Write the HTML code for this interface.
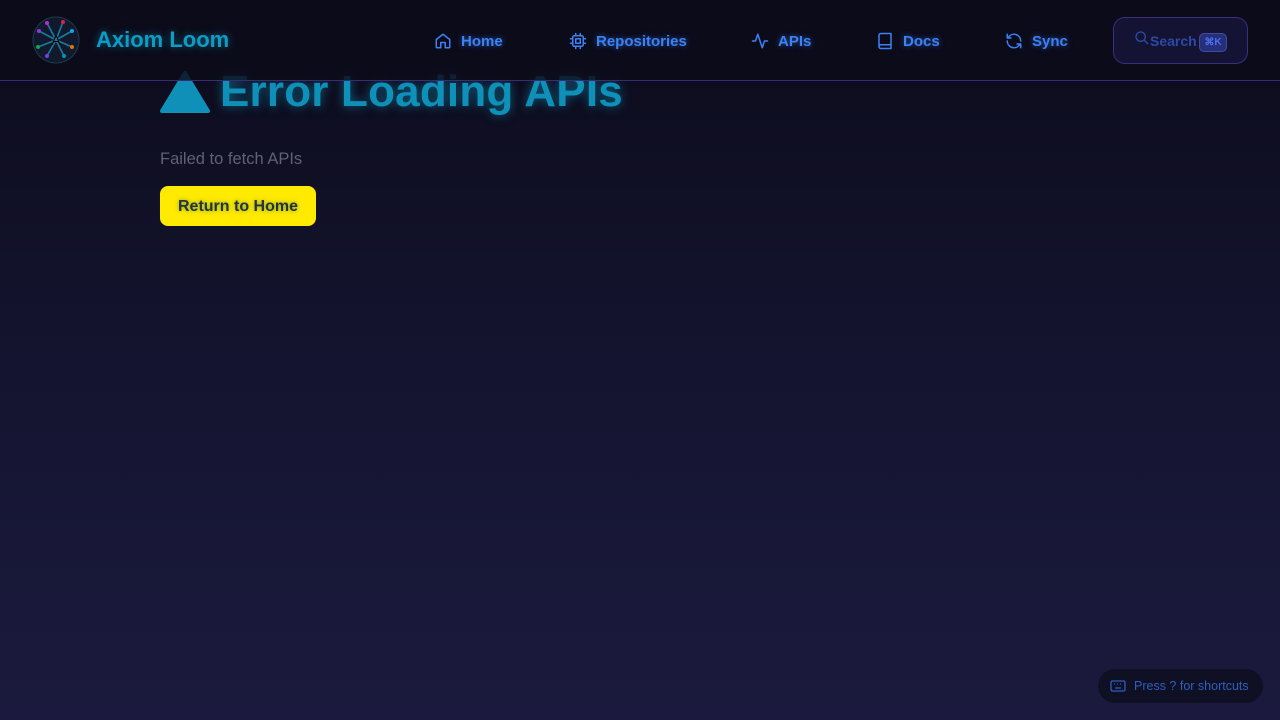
<!DOCTYPE html>
<html><head><meta charset="utf-8"><style>
*{margin:0;padding:0;box-sizing:border-box}
body{width:1280px;height:720px;overflow:hidden;background:linear-gradient(180deg,#0c0b1a 0%,#141430 50%,#1b1a3e 100%);font-family:"Liberation Sans",sans-serif;position:relative}
header{position:absolute;left:0;top:0;width:1280px;height:81px;background:rgba(12,11,26,0.82);border-bottom:1px solid #3b2a78;z-index:2}
.logo{position:absolute;left:32px;top:16px;width:48px;height:48px}
.brand{position:absolute;left:96px;top:27px;font-size:22px;font-weight:bold;color:#0e9cc4;text-shadow:0 0 8px rgba(14,156,196,.6)}
.nav{position:absolute;top:32px;display:flex;align-items:center;gap:9px;color:#3b82f6;font-size:15px;font-weight:bold;text-shadow:0 0 6px rgba(59,130,246,.6)}
.nav svg{width:18px;height:18px;fill:none;stroke:#3b82f6;stroke-width:2;stroke-linecap:round;stroke-linejoin:round}
.search{position:absolute;left:1113px;top:17px;width:135px;height:47px;border:1px solid #3a2f7a;border-radius:12px;background:rgba(40,35,100,.35);color:#2a4aa8;font-size:14px;font-weight:bold}
.kbd{position:absolute;left:85px;top:15px;width:28px;height:19px;border:1px solid #3f4a9a;border-radius:5px;background:#26307a;color:#4a6ef0;font-size:10px;text-align:center;line-height:17px}
h1{position:absolute;left:160px;top:67px;font-size:44px;letter-spacing:0.2px;font-weight:bold;color:#0e90b8;text-shadow:0 0 10px rgba(14,156,196,.6);display:flex;align-items:center;gap:10px;z-index:1}
.msg{position:absolute;left:160px;top:150px;font-size:16.5px;color:#5f6272}
.btn{position:absolute;left:160px;top:186px;width:156px;height:40px;background:#ffea00;border-radius:8px;color:#2b3040;font-size:16px;font-weight:bold;text-align:center;line-height:42px;text-shadow:0 0 4px rgba(60,140,60,.7)}
.sc{position:absolute;left:1098px;top:669px;width:165px;height:34px;border-radius:17px;background:#0f1024;color:#2f5ec0;font-size:12.5px;line-height:35px;padding-left:36px}
</style></head><body>
<header>
<svg class="logo" viewBox="0 0 48 48"><circle cx="24" cy="24" r="23" fill="#101a2c" stroke="#1e3a4a"/>
<g stroke="#1a7aa0" stroke-width="1.6"><line x1="15" y1="7" x2="24" y2="24"/><line x1="31" y1="6" x2="24" y2="24"/><line x1="7" y1="15" x2="24" y2="24"/><line x1="40" y1="15" x2="24" y2="24"/><line x1="6" y1="31" x2="24" y2="24"/><line x1="40" y1="31" x2="24" y2="24"/><line x1="15" y1="40" x2="24" y2="24"/><line x1="32" y1="40" x2="24" y2="24"/></g>
<circle cx="15" cy="7" r="2" fill="#c026d3"/><circle cx="31" cy="6" r="2" fill="#e11d48"/><circle cx="7" cy="15" r="2" fill="#9333ea"/><circle cx="40" cy="15" r="2" fill="#0ea5e9"/><circle cx="6" cy="31" r="2" fill="#16a34a"/><circle cx="40" cy="31" r="2" fill="#d97706"/><circle cx="15" cy="40" r="2" fill="#7c3aed"/><circle cx="32" cy="40" r="2" fill="#0891b2"/>
<text x="24" y="29" font-size="14" text-anchor="middle" fill="#000" font-family="Liberation Sans">A</text></svg>
<div class="brand">Axiom Loom</div>
<div class="nav" style="left:434px"><svg viewBox="0 0 24 24"><path d="M3 10l9-7 9 7v10a1 1 0 0 1-1 1h-5v-7H9v7H4a1 1 0 0 1-1-1z"/></svg>Home</div>
<div class="nav" style="left:569px"><svg viewBox="0 0 24 24"><rect x="5" y="5" width="14" height="14" rx="2"/><rect x="9" y="9" width="6" height="6"/><path d="M9 2v3M15 2v3M9 19v3M15 19v3M2 9h3M2 15h3M19 9h3M19 15h3"/></svg>Repositories</div>
<div class="nav" style="left:751px"><svg viewBox="0 0 24 24"><path d="M22 12h-4l-3 9L9 3l-3 9H2"/></svg>APIs</div>
<div class="nav" style="left:876px"><svg viewBox="0 0 24 24"><path d="M4 19.5A2.5 2.5 0 0 1 6.5 17H20V2H6.5A2.5 2.5 0 0 0 4 4.5v15zM4 19.5A2.5 2.5 0 0 0 6.5 22H20v-5"/></svg>Docs</div>
<div class="nav" style="left:1005px"><svg viewBox="0 0 24 24"><path d="M21 12a9 9 0 0 0-15.5-6.2L3 8M3 3v5h5M3 12a9 9 0 0 0 15.5 6.2L21 16M21 21v-5h-5"/></svg>Sync</div>
<div class="search"><svg style="position:absolute;left:20px;top:12px" width="16" height="16" viewBox="0 0 24 24" fill="none" stroke="#2a4aa8" stroke-width="2"><circle cx="10" cy="10" r="7"/><path d="M15 15l6 6"/></svg><span style="position:absolute;left:36px;top:15px">Search</span><div class="kbd">⌘K</div></div>
</header>
<h1><svg width="50" height="44" viewBox="0 0 50 44"><path d="M25 3L48 41H2z" fill="#0e90b8" stroke="#0e90b8" stroke-width="4" stroke-linejoin="round"/></svg>Error Loading APIs</h1>
<div class="msg">Failed to fetch APIs</div>
<div class="btn">Return to Home</div>
<div class="sc"><svg style="position:absolute;left:12px;top:10px" width="16" height="14" viewBox="0 0 16 14" fill="none" stroke="#2f5ec0" stroke-width="1.3"><rect x="1" y="2" width="14" height="10" rx="1.5"/><path d="M4 5h1M7 5h1M10 5h1M5 9h6"/></svg>Press ? for shortcuts</div>
</body></html>
